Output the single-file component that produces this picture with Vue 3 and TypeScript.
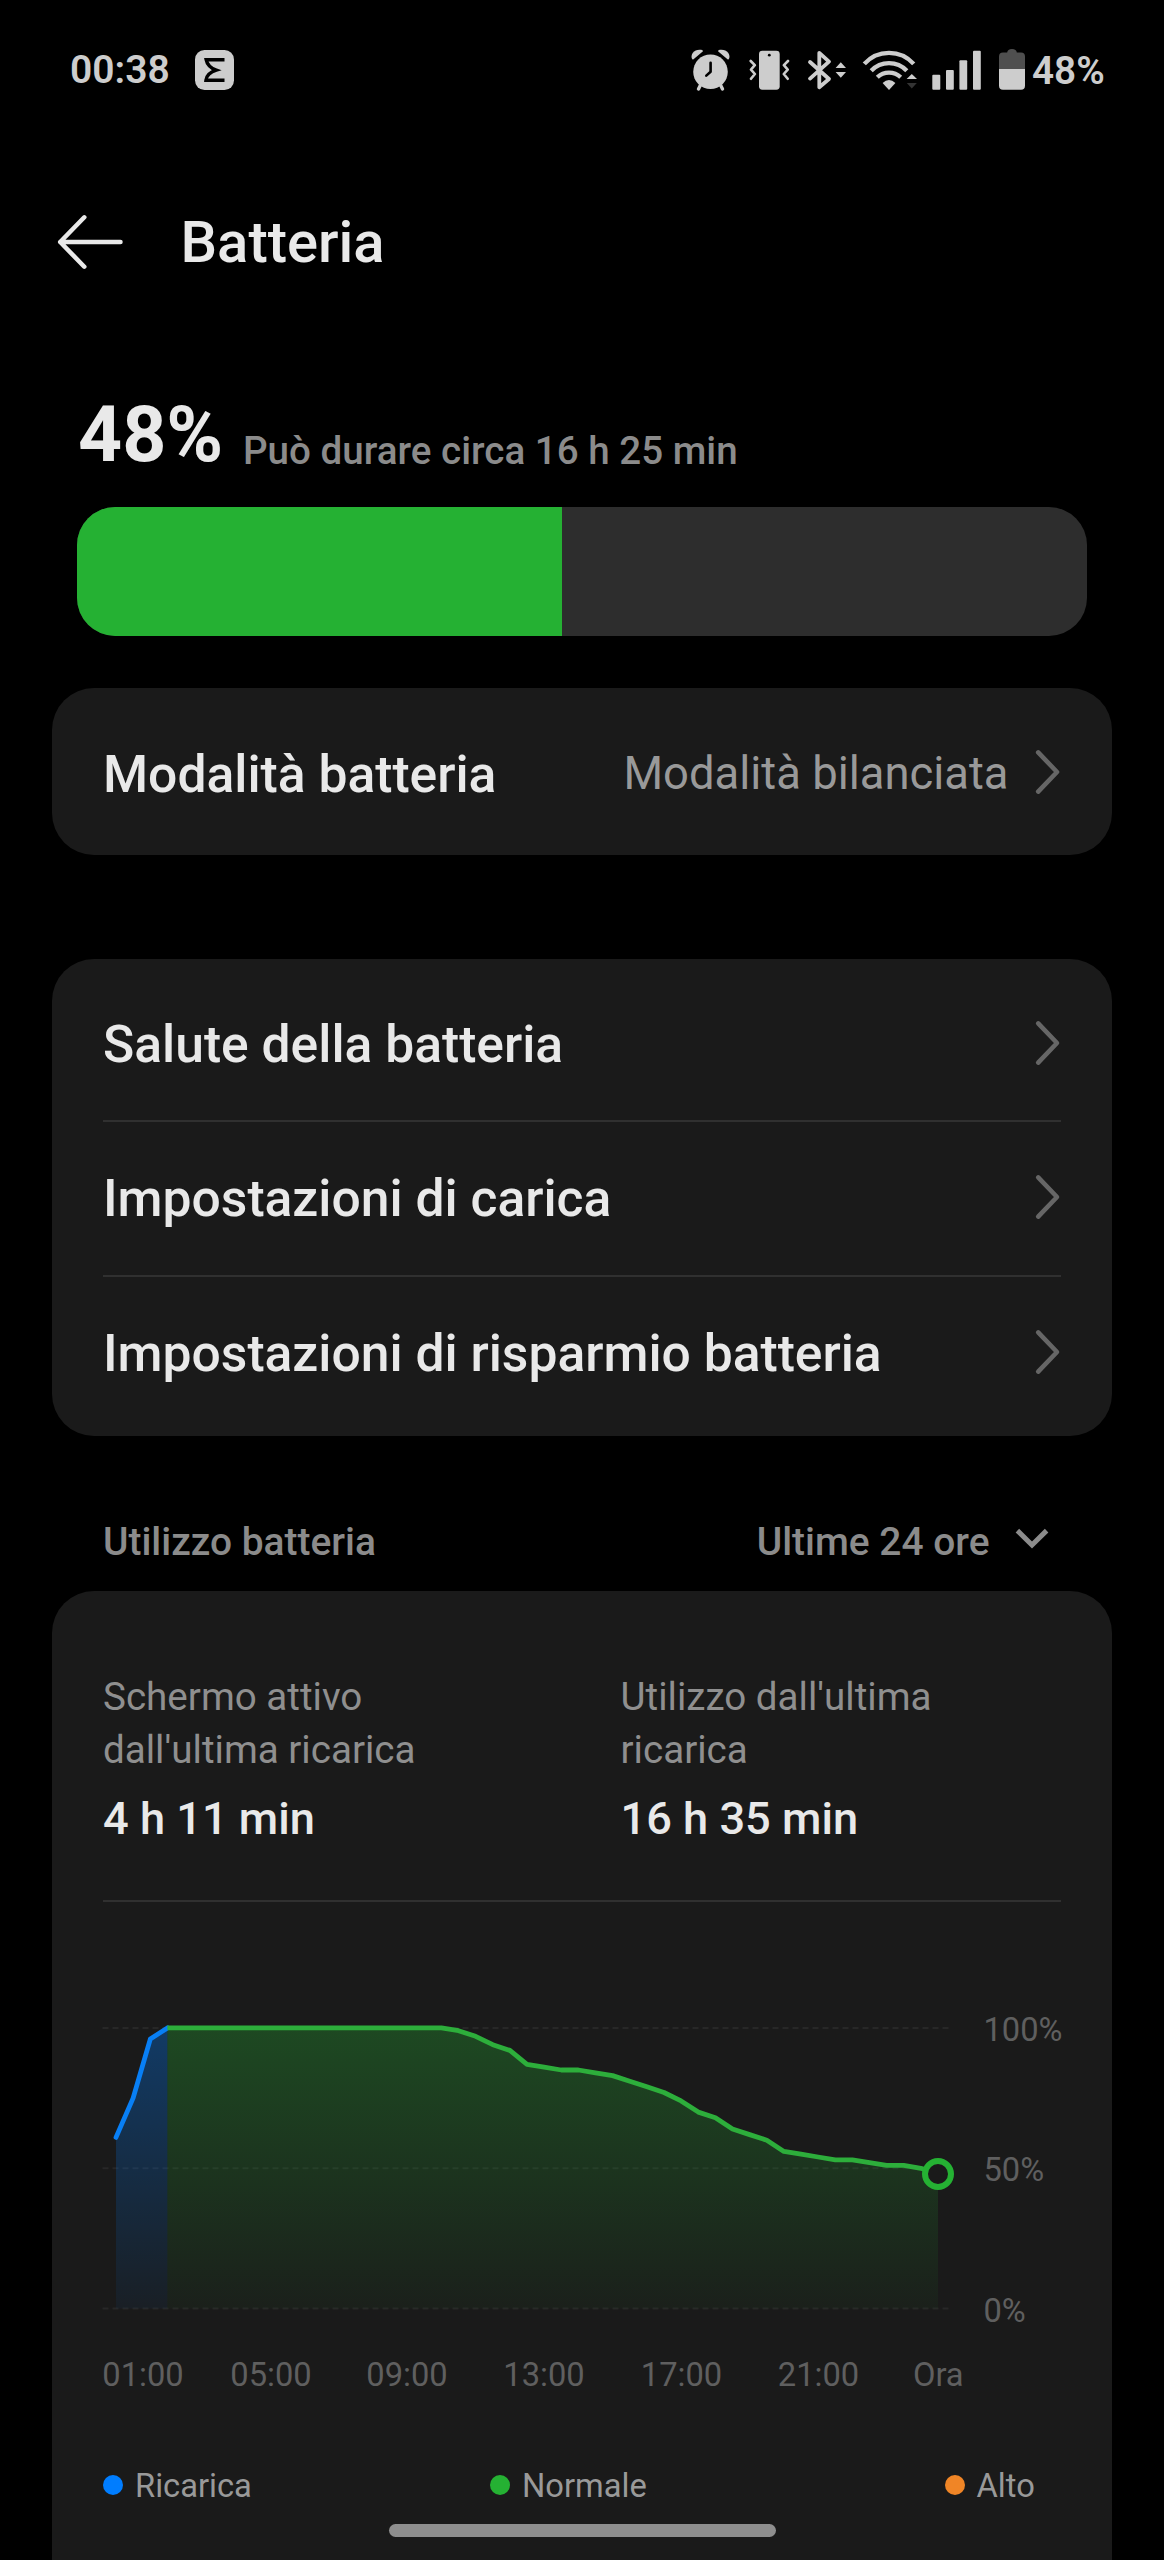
<script setup lang="ts">
interface Row { label: string }

const rows: Row[] = [
  { label: 'Salute della batteria' },
  { label: 'Impostazioni di carica' },
  { label: 'Impostazioni di risparmio batteria' },
]

// Battery level sampled every half hour over the last 24 hours
const levels: number[] = [
  61, 75, 96, ...Array<number>(17).fill(100),
  99, 97, 94, 92, 87, 86, 85, 85, 84, 83, 81, 79, 77, 74, 70, 68, 64, 62, 60,
  56, 55, 54, 53, 53, 52, 51, 51, 50, 48,
]
const chargeEnd = 3
const baseY = 294.6
const px = (i: number): number => 13 + i * 17.125
const py = (v: number): number => baseY - v * 2.807
const pts = (from: number, to: number): string =>
  levels.slice(from, to + 1).map((v, i) => `${px(from + i).toFixed(1)},${py(v).toFixed(1)}`).join(' ')
const area = (from: number, to: number): string =>
  `${px(from)},${baseY} ${pts(from, to)} ${px(to)},${baseY}`

const last = levels.length - 1
const chargeLine = pts(0, chargeEnd)
const chargeArea = area(0, chargeEnd)
const useLine = pts(chargeEnd, last)
const useArea = area(chargeEnd, last)
const grid = [100, 50, 0]
const ticks = [
  { t: '01:00', x: 40 }, { t: '05:00', x: 168 }, { t: '09:00', x: 304 },
  { t: '13:00', x: 441 }, { t: '17:00', x: 578.5 }, { t: '21:00', x: 715.5 }, { t: 'Ora', x: 835.3 },
]
</script>

<template>
  <div class="screen">
    <header class="status">
      <span class="time">00:38</span>
      <svg class="app-icon" width="39" height="40" viewBox="0 0 39 40">
        <rect width="39" height="40" rx="9.5" fill="#cdcdcd" />
        <path d="M29.5 9.7H11.2C12.2 15 16 18.2 21.3 20.2C15.5 22 11.5 25.5 11 30.3H29.5" fill="none" stroke="#000" stroke-width="3.5" />
      </svg>
      <div class="indicators">
        <svg width="40" height="42" viewBox="0 0 40 42">
          <g fill="#cdcdcd">
            <circle cx="19.5" cy="22.8" r="17.3" />
            <path d="M1.2 10.2C-1.6 5 4.5-1 11.3 1.1L12 2.3L2.2 10.6Z" />
            <path d="M37.8 10.2C40.6 5 34.5-1 27.7 1.1L27 2.3L36.8 10.6Z" />
          </g>
          <path d="M10 35L7.5 40M29 35L31.5 40" stroke="#cdcdcd" stroke-width="3.4" stroke-linecap="round" />
          <path d="M19.6 13.8V22.8L15.3 26.6" fill="none" stroke="#000" stroke-width="2.6" stroke-linecap="round" stroke-linejoin="round" />
        </svg>
        <svg class="vibrate" width="42" height="42" viewBox="0 0 42 42">
          <rect x="11" y="1.7" width="20.7" height="39" rx="3.4" fill="#cdcdcd" />
          <circle cx="21.3" cy="6.2" r="1.4" fill="#000" />
          <path d="M2.7 12L6.8 16.2L3 20.6L6.9 25L3 29.8M40 12L35.9 16.2L39.7 20.6L35.8 25L39.7 29.8" fill="none" stroke="#cdcdcd" stroke-width="2.6" stroke-linecap="round" stroke-linejoin="round" />
        </svg>
        <svg class="bluetooth" width="40" height="42" viewBox="0 0 40 42">
          <path d="M3 13L22 30L12.3 38.2V3.8L22 12.6L3 29.6" fill="none" stroke="#cdcdcd" stroke-width="3.8" stroke-linecap="round" stroke-linejoin="round" />
          <path d="M28.6 19H39L33.8 13.2ZM28.6 23H39L33.8 28.8Z" fill="#cdcdcd" />
        </svg>
        <svg class="wifi" width="56" height="42" viewBox="0 0 56 42">
          <g fill="none" stroke="#cdcdcd" stroke-width="4.3">
            <path d="M1.3 14.9A33 33 0 0 1 50.7 14.9" />
            <path d="M8.2 21.7A24.6 24.6 0 0 1 43.8 21.7" />
            <path d="M14.3 28.2A17 17 0 0 1 37.7 28.2" />
          </g>
          <path d="M19.6 34Q26 28 32.4 34L26 40.9Z" fill="#cdcdcd" />
          <path d="M43.6 30H54L48.8 25Z" fill="#cdcdcd" />
          <path d="M43.8 34H53.8L48.8 39.4Z" fill="#333" />
        </svg>
        <svg class="signal" width="49" height="42" viewBox="0 0 49 42" fill="#cdcdcd">
          <rect x=".3" y="25.7" width="8" height="15" rx="1" />
          <rect x="14" y="21" width="7.8" height="19.7" rx="1" />
          <rect x="27.4" y="11.3" width="7.8" height="29.4" rx="1" />
          <rect x="41" y="1.7" width="7.8" height="39" rx="1" />
        </svg>
        <svg class="cell" width="28" height="42" viewBox="0 0 28 42">
          <path d="M9.2 3.5Q9.5 0 14 0T18.8 3.5H23Q27 3.5 27 7.5V20H1V7.5Q1 3.5 5 3.5Z" fill="#4f4f4f" />
          <path d="M1 20H27V36.7Q27 40.7 23 40.7H5Q1 40.7 1 36.7Z" fill="#cdcdcd" />
        </svg>
        <span class="pct">48%</span>
      </div>
    </header>

    <nav class="titlebar">
      <svg width="68" height="56" viewBox="0 0 68 56">
        <path d="M28.3 3.3L4.2 28L28.3 52.7M4.2 28H64.5" fill="none" stroke="#e9e9e9" stroke-width="4.5" stroke-linecap="round" stroke-linejoin="round" />
      </svg>
      <h1>Batteria</h1>
    </nav>

    <section class="summary">
      <div class="charge">
        <strong>48%</strong>
        <span>Può durare circa 16 h 25 min</span>
      </div>
      <div class="gauge"><div class="fill" :style="{ width: levels[last] + '%' }"></div></div>
    </section>

    <section class="card mode">
      <span class="label">Modalità batteria</span>
      <span class="value">Modalità bilanciata</span>
      <svg class="chev" width="26" height="46" viewBox="0 0 26 46"><path d="M3.2 3.4L22 23L3.2 42.6" /></svg>
    </section>

    <section class="card list">
      <div v-for="r in rows" :key="r.label" class="row">
        <span class="label">{{ r.label }}</span>
        <svg class="chev" width="26" height="46" viewBox="0 0 26 46"><path d="M3.2 3.4L22 23L3.2 42.6" /></svg>
      </div>
    </section>

    <div class="section-head">
      <span>Utilizzo batteria</span>
      <span class="range">Ultime 24 ore</span>
      <svg width="34" height="22" viewBox="0 0 34 22"><path d="M2.4 2.6L17 17L31.6 2.6" fill="none" stroke="#8b8b8b" stroke-width="5" /></svg>
    </div>

    <section class="card usage">
      <div class="stats">
        <div class="stat">
          <p>Schermo attivo<br>dall'ultima ricarica</p>
          <b>4 h 11 min</b>
        </div>
        <div class="stat">
          <p>Utilizzo dall'ultima<br>ricarica</p>
          <b>16 h 35 min</b>
        </div>
      </div>
      <svg class="chart" width="960" height="400" viewBox="0 0 960 400">
        <defs>
          <linearGradient id="gUse" gradientUnits="userSpaceOnUse" x1="0" y1="14" x2="0" y2="294">
            <stop offset="0" stop-color="#25b133" stop-opacity=".31" />
            <stop offset="1" stop-color="#25b133" stop-opacity=".04" />
          </linearGradient>
          <linearGradient id="gCharge" gradientUnits="userSpaceOnUse" x1="0" y1="14" x2="0" y2="294">
            <stop offset="0" stop-color="#007dff" stop-opacity=".33" />
            <stop offset="1" stop-color="#007dff" stop-opacity=".05" />
          </linearGradient>
        </defs>
        <g v-for="g in grid" :key="g">
          <line x1="-.5" :y1="py(g)" x2="848" :y2="py(g)" stroke="#fff" stroke-opacity=".06" stroke-width="2" stroke-dasharray="6 4" />
          <text x="880.5" :y="py(g) + 13" class="axis">{{ g }}%</text>
        </g>
        <polygon :points="chargeArea" fill="url(#gCharge)" />
        <polygon :points="useArea" fill="url(#gUse)" />
        <polyline :points="chargeLine" fill="none" stroke="#087ff5" stroke-width="4.8" stroke-linecap="round" stroke-linejoin="round" />
        <polyline :points="useLine" fill="none" stroke="#2dae3b" stroke-width="4.8" stroke-linejoin="round" />
        <circle :cx="px(last)" cy="160" r="13" fill="#1a1a1a" stroke="#25b133" stroke-width="6" />
        <text v-for="k in ticks" :key="k.t" :x="k.x" y="372" text-anchor="middle" class="axis">{{ k.t }}</text>
      </svg>
      <div class="legend">
        <div class="item"><i class="dot charge-dot"></i>Ricarica</div>
        <div class="item normal"><i class="dot normal-dot"></i>Normale</div>
        <div class="item high"><i class="dot high-dot"></i>Alto</div>
      </div>
    </section>
    <div class="home"></div>
  </div>
</template>

<style>
body { margin: 0; background: #000; }
</style>

<style scoped>
.screen {
  position: relative;
  width: 1164px;
  height: 2560px;
  overflow: hidden;
  background: #000;
  color: #e9e9e9;
  font-family: Roboto, "Liberation Sans", sans-serif;
  box-sizing: border-box;
}
.screen *, .screen *::before { box-sizing: border-box; }
svg { display: block; flex: none; overflow: visible; }
.status {
  display: flex;
  align-items: center;
  height: 140px;
  padding: 0 60px 0 70px;
  color: #cdcdcd;
  font-size: 39px;
  font-weight: 600;
}
.time { width: 125px; white-space: nowrap; }
.indicators { display: flex; align-items: center; margin-left: auto; }
.vibrate { margin-left: 17px; }
.bluetooth { margin-left: 17px; }
.wifi { margin-left: 16px; }
.signal { margin-left: 13px; }
.cell { margin-left: 17px; }
.pct { width: 72px; margin-left: 6px; font-size: 38.7px; white-space: nowrap; }
.titlebar { display: flex; align-items: center; height: 204px; padding-left: 56px; }
h1 { margin: 0 0 0 56.5px; font-size: 58px; font-weight: 500; line-height: 68px; }
.summary { padding: 46px 77.5px 0 77px; }
.charge { display: flex; align-items: flex-end; height: 90px; margin-bottom: 27px; padding-left: 1px; }
.charge strong { width: 165px; font-size: 77px; line-height: 90px; font-weight: 700; }
.charge span { color: #8b8b8b; font-size: 38.6px; font-weight: 500; line-height: 44px; margin-bottom: 7px; white-space: nowrap; }
.gauge { height: 129.3px; border-radius: 38px; background: #2d2d2d; overflow: hidden; }
.fill { height: 100%; background: #25b133; }
.card { margin: 0 52px; border-radius: 42px; background: #1a1a1a; }
.label { font-size: 51.6px; font-weight: 500; line-height: 60px; white-space: nowrap; }
.chev path { fill: none; stroke: #666; stroke-width: 4.6; stroke-linecap: round; stroke-linejoin: round; }
.mode { display: flex; align-items: center; height: 167.5px; margin-top: 51.7px; padding: 6px 51px 0; }
.mode .value { margin-left: auto; margin-right: 26.5px; color: #999; font-size: 45.4px; margin-bottom: 2px; }
.list { margin-top: 103.3px; height: 477.2px; padding: 6px 51px; }
.row { display: flex; align-items: center; justify-content: space-between; height: 155px; padding-top: 6px; }
.row + .row { border-top: 2px solid #303030; padding-top: 2px; }
.row .chev, .mode .chev { margin-right: 0; margin-bottom: 5px; }
.section-head { display: flex; align-items: center; height: 155.3px; padding: 56px 115px 0 103px; color: #8b8b8b; font-size: 38.9px; font-weight: 500; }
.section-head svg { margin-bottom: 5px; }
.range { margin-left: auto; margin-right: 25.5px; }
.usage { height: 1050px; padding: 80px 51px 0; }
.stats { display: flex; height: 231px; border-bottom: 2px solid #303030; }
.stat { flex: none; width: 517.5px; }
.stat p { margin: 0; color: #8f8f8f; font-size: 38.6px; line-height: 52.6px; }
.stat b { display: block; margin-top: 15.5px; font-size: 45.2px; line-height: 54px; font-weight: 500; white-space: nowrap; }
.chart { margin-top: 112px; }
.axis { fill: #5f5f5f; font-size: 32.7px; font-family: Roboto, "Liberation Sans", sans-serif; }
.legend { display: flex; margin-top: 52px; color: #999; font-size: 32.7px; line-height: 40px; }
.item { display: flex; align-items: center; width: 387px; }
.item.normal { width: 454.5px; }
.item.high { width: auto; }
.dot { width: 20px; height: 20px; margin: 0 12px 2px 0; border-radius: 50%; }
.charge-dot { background: #007dff; }
.normal-dot { background: #25b133; }
.high-dot { background: #f08526; }
.home { position: absolute; left: 388.5px; top: 2524px; width: 387px; height: 13px; border-radius: 6.5px; background: #8e8e8e; }
</style>
